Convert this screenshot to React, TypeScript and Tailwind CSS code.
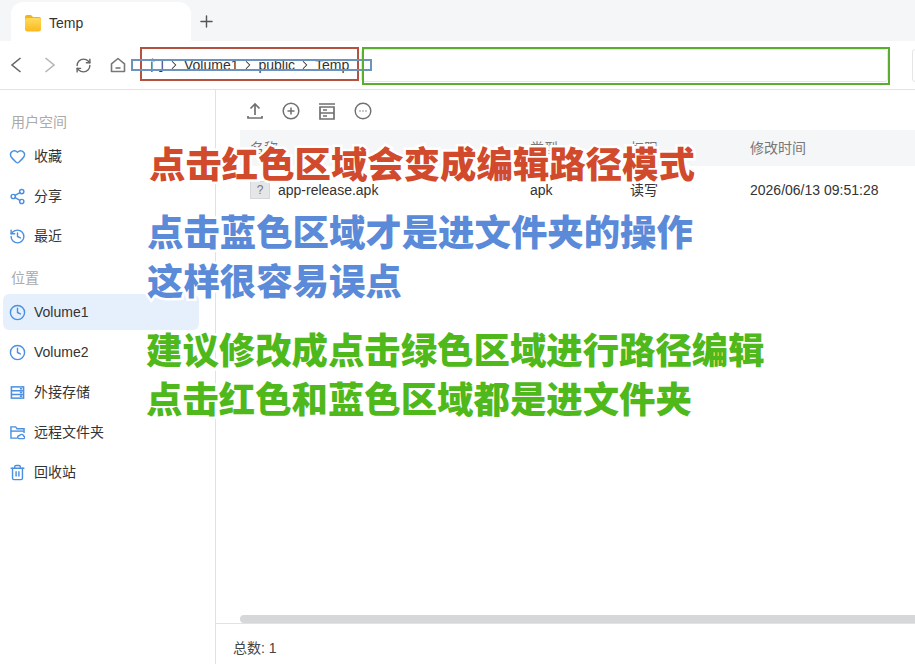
import { useState } from "react";
import { ChevronRight, RefreshCw, Plus, Heart, Share2, History, Clock4, Trash2 } from "lucide-react";

const iconClass = "w-[17px] h-[17px]";

const favourites = [
  { label: "收藏", icon: <Heart className={iconClass} strokeWidth={2} /> },
  { label: "分享", icon: <Share2 className={iconClass} strokeWidth={2} /> },
  { label: "最近", icon: <History className={iconClass} strokeWidth={2} /> },
];

function DriveIcon() {
  return (
    <svg viewBox="0 0 16 16" className="w-[15px] h-[15px]" fill="none" stroke="currentColor" strokeWidth="1.6">
      <rect x="1.5" y="2" width="13" height="12" />
      <path d="M1.5 6h13M1.5 10h13M10.5 4h2.5M10.5 8h2.5M10.5 12h2.5" />
    </svg>
  );
}

function RemoteIcon() {
  return (
    <svg viewBox="0 0 16 16" className="w-[15px] h-[15px]" fill="none" stroke="currentColor" strokeWidth="1.5">
      <path d="M8 14H1v-12h5l1.5 2h7.5v4.5" />
      <path d="M1 6.5h14" />
      <path d="M9.5 14.5h4.8a1.4 1.4 0 0 0 .2-2.8 2.3 2.3 0 0 0-4.3-.4 1.6 1.6 0 0 0-.7 3.2z" />
    </svg>
  );
}

const places = [
  { label: "Volume1", icon: <Clock4 className={iconClass} strokeWidth={2} />, active: true },
  { label: "Volume2", icon: <Clock4 className={iconClass} strokeWidth={2} /> },
  { label: "外接存储", icon: <DriveIcon /> },
  { label: "远程文件夹", icon: <RemoteIcon /> },
  { label: "回收站", icon: <Trash2 className={iconClass} strokeWidth={2} /> },
];

function SideItem({ label, icon, active }: { label: string; icon: React.ReactNode; active?: boolean }) {
  return (
    <div className={`h-9 mb-1 ml-[3px] mr-4 pl-[5px] flex items-center gap-[8px] rounded-md text-sm text-[#333] ${active ? "bg-[#e6f0fd]" : ""}`}>
      <span className="w-[18px] flex justify-center text-[#4a8fe0]">{icon}</span>
      {label}
    </div>
  );
}

export default function App() {
  const [path] = useState(["Volume1", "public", "Temp"]);

  return (
    <div className="relative w-[915px] h-[664px] overflow-hidden bg-white flex flex-col font-['Liberation_Sans','Noto_Sans_CJK_SC',sans-serif]">
      <div className="h-[41px] shrink-0 bg-[#f5f6f8] flex items-end pl-[11px]">
        <div className="w-[180px] h-[39px] bg-white rounded-t-xl flex items-center gap-[7px] pl-[13px] pt-[2px] text-sm text-[#333]">
          <svg viewBox="0 0 18 18" className="w-[18px] h-[18px]">
            <defs>
              <linearGradient id="folder" x1="0" y1="0" x2="0" y2="1">
                <stop offset="0" stopColor="#ffdc5c" />
                <stop offset="1" stopColor="#fbb81f" />
              </linearGradient>
            </defs>
            <path d="M1 3a2 2 0 0 1 2-2h4l2 2h6a2 2 0 0 1 2 2v3H1z" fill="#f3b31f" />
            <rect x="1" y="4" width="16" height="13.5" rx="2.5" fill="url(#folder)" />
          </svg>
          Temp
        </div>
        <div className="h-[39px] w-[30px] flex items-center justify-center text-[#555]">
          <Plus className="w-[19px] h-[19px]" strokeWidth={1.8} />
        </div>
      </div>

      <div className="h-[49px] shrink-0 border-b border-[#e2e2e2] flex items-center overflow-hidden">
        <svg viewBox="0 0 12 16" className="ml-[10px] w-3 h-4 shrink-0 text-[#666]" fill="none" stroke="currentColor" strokeWidth="1.6">
          <path d="M10.5 1 2 8l8.5 7" />
        </svg>
        <svg viewBox="0 0 12 16" className="ml-[22px] w-3 h-4 shrink-0 text-[#b5b5b5]" fill="none" stroke="currentColor" strokeWidth="1.6">
          <path d="M1.5 1 10 8l-8.5 7" />
        </svg>
        <RefreshCw className="ml-[19px] w-[17px] h-[17px] shrink-0 text-[#666]" strokeWidth={2} />
        <svg viewBox="0 0 16 16" className="ml-[18px] w-4 h-4 shrink-0 text-[#777]" fill="none" stroke="currentColor" strokeWidth="1.6">
          <path d="M1.5 6.8 8 1.5l6.5 5.3v7.7h-13z" strokeLinejoin="round" />
          <path d="M5.5 11h5" />
        </svg>
        <div className="ml-[24px] w-[211px] shrink-0 flex items-center gap-[3px] text-sm text-[#333] whitespace-nowrap">
          <span>门</span>
          {path.map((p) => (
            <span key={p} className="flex items-center gap-[3px]">
              <ChevronRight className="w-[14px] h-[14px]" strokeWidth={1.8} />
              {p}
            </span>
          ))}
        </div>
        <div className="w-[527px] h-[33px] shrink-0 rounded-[3px] border border-[#e5e5e5]" />
        <div className="ml-[24px] w-8 h-[33px] shrink-0 rounded-[3px] border border-[#e5e5e5]" />
      </div>

      <div className="flex-1 min-h-0 flex">
        <aside className="w-[216px] shrink-0 border-r border-[#e2e2e2] pt-[23px]">
          <div className="pl-[11px] text-sm leading-[18px] text-[#aaa] mb-[7px]">用户空间</div>
          {favourites.map((f) => (
            <SideItem key={f.label} {...f} />
          ))}
          <div className="pl-[11px] mt-[15px] text-sm leading-[18px] text-[#aaa] mb-[7px]">位置</div>
          {places.map((p) => (
            <SideItem key={p.label} {...p} />
          ))}
        </aside>

        <main className="flex-1 min-w-0 flex flex-col">
          <div className="h-10 shrink-0 pl-[30px] pt-px flex items-center gap-[18px] text-[#707070]">
            <svg viewBox="0 0 18 18" className="w-[18px] h-[18px]" fill="none" stroke="currentColor" strokeWidth="1.7">
              <path d="M9 13V2M4.5 6.5 9 2l4.5 4.5M2 14v2h14v-2" />
            </svg>
            <svg viewBox="0 0 18 18" className="w-[18px] h-[18px]" fill="none" stroke="currentColor" strokeWidth="1.5">
              <circle cx="9" cy="9" r="7.8" />
              <path d="M9 5.5v7M5.5 9h7" />
            </svg>
            <svg viewBox="0 0 18 18" className="w-[18px] h-[18px]" fill="none" stroke="currentColor" strokeWidth="1.7">
              <path d="M1 2h16M2 5h14v12H2zM2 11h14M5 8h4M5 14h4" />
            </svg>
            <svg viewBox="0 0 18 18" className="w-[18px] h-[18px]" fill="none" stroke="currentColor" strokeWidth="1.4">
              <circle cx="9" cy="9" r="7.8" />
              <path d="M5.5 9h1M8.5 9h1M11.5 9h1" strokeWidth="1.3" />
            </svg>
          </div>

          <div className="ml-6 h-9 shrink-0 bg-[#f5f6f8] grid grid-cols-[280px_100px_120px_1fr] items-center pl-[10px] text-sm text-[#777]">
            <span>名称</span>
            <span>类型</span>
            <span>权限</span>
            <span>修改时间</span>
          </div>
          <div className="ml-6 h-12 shrink-0 grid grid-cols-[280px_100px_120px_1fr] items-center pl-[10px] text-sm text-[#333]">
            <span className="flex items-center gap-2">
              <span className="w-5 h-[18px] bg-[#e4e6e8] border border-[#d5d7da] flex items-center justify-center text-xs text-[#777]">?</span>
              app-release.apk
            </span>
            <span>apk</span>
            <span>读写</span>
            <span>2026/06/13 09:51:28</span>
          </div>

          <div className="flex-1" />
          <div className="ml-6 h-2 shrink-0 rounded-l bg-[#d6d7d9]" />
          <div className="h-[41px] shrink-0 border-t border-[#e2e2e2] pl-[17px] pt-[15px] text-sm leading-[18px] text-[#444]">总数: 1</div>
        </main>
      </div>

      {/* annotations drawn over the screenshot */}
      <div className="absolute left-[140px] top-[47px] w-[219px] h-[34px] border-[2px] border-[#b5523f]" />
      <div className="absolute left-[131px] top-[59px] w-[241px] h-[12px] border-[2px] border-[#6a94bf]" />
      <div className="absolute left-[362px] top-[47px] w-[528px] h-[38px] border-[2px] border-[#5aae2e]" />
      <div className="absolute left-[149px] top-[144px] text-[36.4px] leading-[44px] font-black text-[#d24a2c] whitespace-nowrap [-webkit-text-stroke:5px_white] [paint-order:stroke_fill]">点击红色区域会变成编辑路径模式</div>
      <div className="absolute left-[147px] top-[209px] text-[36.4px] leading-[49px] font-black text-[#5b8ad9] whitespace-nowrap [-webkit-text-stroke:5px_white] [paint-order:stroke_fill]">
        点击蓝色区域才是进文件夹的操作
        <br />
        这样很容易误点
      </div>
      <div className="absolute left-[146px] top-[327px] text-[36.4px] leading-[49px] font-black text-[#4fb81a] whitespace-nowrap [-webkit-text-stroke:5px_white] [paint-order:stroke_fill]">
        建议修改成点击绿色区域进行路径编辑
        <br />
        点击红色和蓝色区域都是进文件夹
      </div>
    </div>
  );
}
